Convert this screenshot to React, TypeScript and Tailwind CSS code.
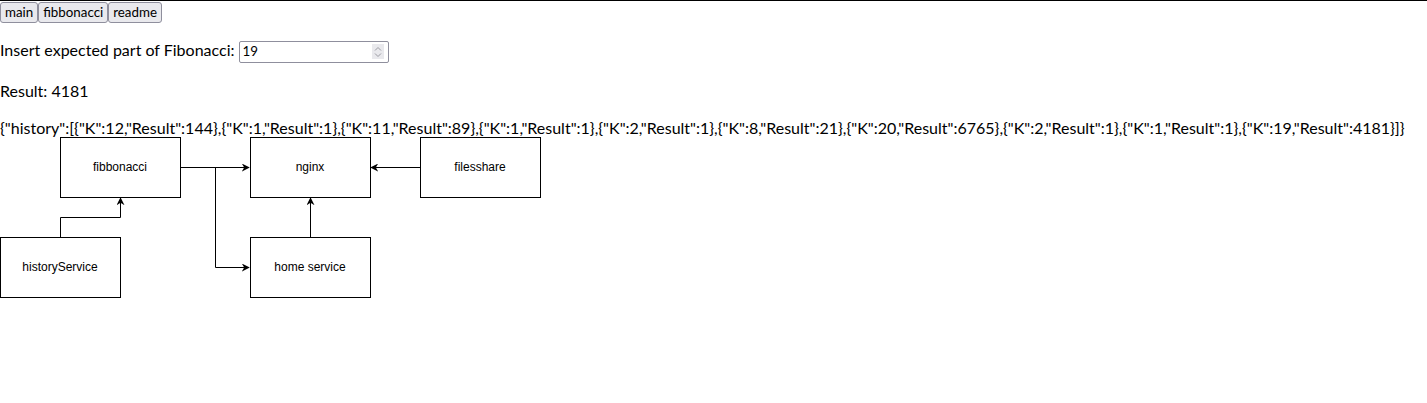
const history = [
  { K: 12, Result: 144 },
  { K: 1, Result: 1 },
  { K: 11, Result: 89 },
  { K: 1, Result: 1 },
  { K: 2, Result: 1 },
  { K: 8, Result: 21 },
  { K: 20, Result: 6765 },
  { K: 2, Result: 1 },
  { K: 1, Result: 1 },
  { K: 19, Result: 4181 },
];

function NavButton({ label }: { label: string }) {
  return (
    <button className="h-[21px] rounded-[3px] border border-[#8f8f9d] bg-[#e9e9ed] px-[4px] text-[13.33px] leading-none text-black">
      {label}
    </button>
  );
}

function NumberBox({ value }: { value: number }) {
  return (
    <span className="inline-flex h-[22px] w-[150px] items-center rounded-[2px] border border-[#8f8f9d] bg-white pl-[3px] pr-[4px] align-middle">
      <span className="flex-1 text-[13.33px] leading-none">{value}</span>
      <span className="flex h-[15px] w-[12px] flex-col items-center justify-center bg-[#e9e9ed]">
        <svg width="8" height="12" viewBox="0 0 8 12" fill="none" stroke="#9a9aa2" strokeWidth="1">
          <path d="M1 4.5 L4 1.5 L7 4.5" />
          <path d="M1 7.5 L4 10.5 L7 7.5" />
        </svg>
      </span>
    </span>
  );
}

function Box({ x, y, label }: { x: number; y: number; label: string }) {
  return (
    <g>
      <rect x={x + 0.5} y={y + 0.5} width="120" height="60" fill="#fff" stroke="#000" />
      <text x={x + 60} y={y + 34} textAnchor="middle" fontSize="12" fontFamily="'Liberation Sans', Arial, sans-serif" fill="#000">
        {label}
      </text>
    </g>
  );
}

function Diagram() {
  return (
    <svg width="542" height="162" viewBox="0 0 542 162" className="block">
      <defs>
        <marker id="ah" viewBox="0 0 10 10" refX="9" refY="5" markerWidth="8" markerHeight="8" orient="auto">
          <path d="M0 0 L10 5 L0 10 L3 5 Z" fill="#000" />
        </marker>
      </defs>
      <g stroke="#000" fill="none" strokeWidth="1">
        <path d="M180 30.5 H249" markerEnd="url(#ah)" />
        <path d="M215.5 30.5 V130.5 H249" markerEnd="url(#ah)" />
        <path d="M60.5 100 V80.5 H120.5 V61" markerEnd="url(#ah)" />
        <path d="M310.5 100 V61" markerEnd="url(#ah)" />
        <path d="M420 30.5 H371" markerEnd="url(#ah)" />
      </g>
      <Box x={60} y={0} label="fibbonacci" />
      <Box x={250} y={0} label="nginx" />
      <Box x={420} y={0} label="filesshare" />
      <Box x={0} y={100} label="historyService" />
      <Box x={250} y={100} label="home service" />
    </svg>
  );
}

export default function App() {
  return (
    <div className="min-h-[403px] border-t border-black bg-white font-['Lato',sans-serif] text-[16px] text-black">
      <div className="mt-[1px] flex">
        <NavButton label="main" />
        <NavButton label="fibbonacci" />
        <NavButton label="readme" />
      </div>
      <p className="my-4 leading-[22px]">
        Insert expected part of Fibonacci: <NumberBox value={19} />
      </p>
      <p className="my-4">Result: 4181</p>
      <div className="mt-4 leading-[18px]">{JSON.stringify({ history })}</div>
      <Diagram />
    </div>
  );
}
